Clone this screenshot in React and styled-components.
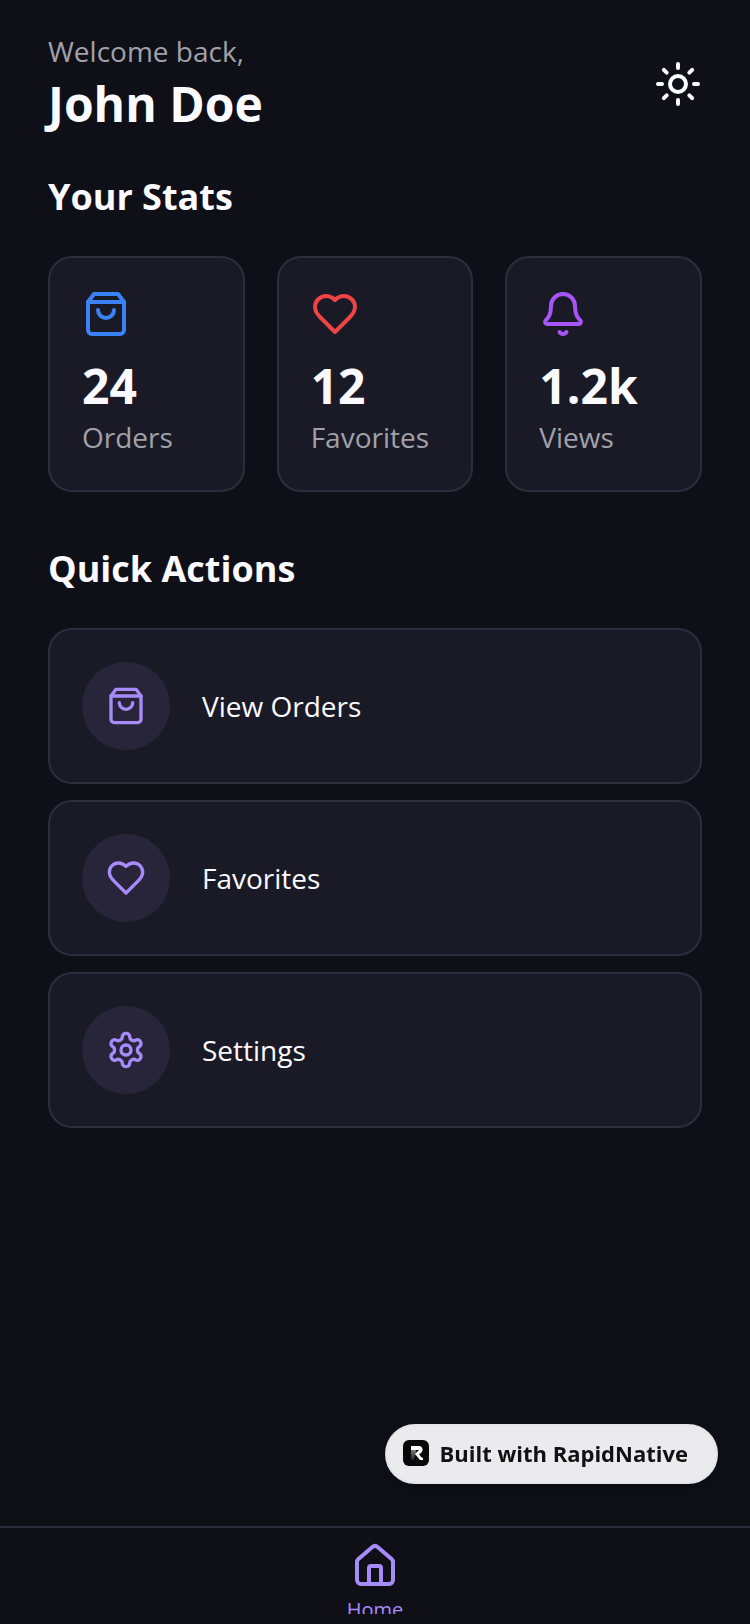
import React, { useState } from 'react';
import styled, { createGlobalStyle, css } from 'styled-components';
import { Sun, Bell, House } from 'lucide-react';

const background = '#0f0f18';
const surface = '#1a1a26';
const line = '#2d2d3d';
const foreground = '#fafaff';
const muted = '#a1a1aa';
const primary = '#a78bfa';

const GlobalStyle = createGlobalStyle`
  *, *::before, *::after {
    box-sizing: border-box;
  }
  body {
    margin: 0;
    background: ${background};
    color: ${foreground};
    font-family: 'Open Sans', 'Noto Sans', sans-serif;
    font-size: 28px;
    line-height: 40px;
  }
  button {
    padding: 0;
    border: 0;
    background: none;
    color: inherit;
    font: inherit;
    text-align: left;
    cursor: pointer;
  }
  h1, h2, p, ul {
    margin: 0;
    padding: 0;
    list-style: none;
  }
  svg {
    display: block;
  }
`

const cardStyles = css`
  background: ${surface};
  border: 2px solid ${line};
  border-radius: 24px;
  padding: 32px;
`

const Screen = styled.div`
  display: flex;
  flex-direction: column;
  min-height: 100vh;
`

const Header = styled.header`
  display: flex;
  align-items: center;
  justify-content: space-between;
  padding: 32px 48px;
`

const Muted = styled.p`
  margin-bottom: 2px;
  color: ${muted};
  line-height: 38px;
`

const Name = styled.h1`
  font-size: 48px;
  line-height: 64px;
  font-weight: 700;
`

const Content = styled.main`
  flex: 1;
  display: flex;
  flex-direction: column;
  gap: 48px;
  padding: 0 48px 48px;
`

const SectionTitle = styled.h2`
  margin-bottom: 30px;
  font-size: 36px;
  line-height: 58px;
  font-weight: 700;
`

const StatGrid = styled.div`
  display: grid;
  grid-template-columns: repeat(3, 1fr);
  gap: 32px;
`

const StatCard = styled.div`
  ${cardStyles};
`

const StatValue = styled.p`
  margin-top: 16px;
  font-size: 48px;
  line-height: 64px;
  font-weight: 700;
`

const ActionList = styled.ul`
  display: grid;
  gap: 16px;
`

const ActionButton = styled.button`
  && {
    ${cardStyles};
  }
  display: flex;
  align-items: center;
  gap: 32px;
  width: 100%;
`

const IconCircle = styled.span`
  display: grid;
  place-items: center;
  width: 88px;
  height: 88px;
  border-radius: 50%;
  background: rgba(167, 139, 250, 0.1);
  color: ${primary};
`

const TabBar = styled.nav`
  position: sticky;
  bottom: 0;
  display: flex;
  height: 98px;
  padding: 14px 0 10px;
  border-top: 2px solid ${line};
  background: ${background};
`

const Tab = styled.a`
  flex: 1;
  display: flex;
  flex-direction: column;
  align-items: center;
  gap: 6px;
  overflow: hidden;
  color: ${props => props.$active ? primary : muted};
  font-size: 20px;
  line-height: 28px;
  text-decoration: none;
  svg {
    flex-shrink: 0;
  }
`

const Badge = styled.a`
  position: fixed;
  right: 32px;
  bottom: 140px;
  display: flex;
  align-items: center;
  gap: 10px;
  height: 60px;
  padding: 0 28px 2px 16px;
  border: 2px solid #e4e4ea;
  border-radius: 30px;
  background: #ebebed;
  box-shadow: 0 4px 12px rgba(0, 0, 0, 0.3);
  color: #111114;
  font-size: 22px;
  line-height: 32px;
  font-weight: 700;
  text-decoration: none;
  white-space: nowrap;
`

function StrokeIcon({size, color = 'currentColor', children}) {
  return (
    <svg
      width={size}
      height={size}
      viewBox="0 0 24 24"
      fill="none"
      stroke={color}
      strokeWidth="2"
      strokeLinecap="round"
      strokeLinejoin="round"
      aria-hidden="true"
    >
      {children}
    </svg>
  )
}

function BagIcon(props) {
  return (
    <StrokeIcon {...props}>
      <path d="M6 2 3 6v14a2 2 0 0 0 2 2h14a2 2 0 0 0 2-2V6l-3-4Z" />
      <path d="M3 6h18" />
      <path d="M16 10a4 4 0 0 1-8 0" />
    </StrokeIcon>
  )
}

function HeartIcon(props) {
  return (
    <StrokeIcon {...props}>
      <path d="M19 14c1.49-1.46 3-3.21 3-5.5A5.5 5.5 0 0 0 16.5 3c-1.76 0-3 .5-4.5 2-1.5-1.5-2.74-2-4.5-2A5.5 5.5 0 0 0 2 8.500c0 2.300 1.500 4.050 3 5.500l7 7Z" />
    </StrokeIcon>
  )
}

function GearIcon(props) {
  return (
    <StrokeIcon {...props}>
      <path d="M12.22 2h-.44a2 2 0 0 0-2 2v.18a2 2 0 0 1-1 1.73l-.43.25a2 2 0 0 1-2 0l-.15-.08a2 2 0 0 0-2.73.73l-.22.38a2 2 0 0 0 .73 2.73l.15.1a2 2 0 0 1 1 1.72v.51a2 2 0 0 1-1 1.74l-.15.09a2 2 0 0 0-.73 2.73l.22.38a2 2 0 0 0 2.73.73l.15-.08a2 2 0 0 1 2 0l.43.25a2 2 0 0 1 1 1.73V20a2 2 0 0 0 2 2h.44a2 2 0 0 0 2-2v-.18a2 2 0 0 1 1-1.73l.43-.25a2 2 0 0 1 2 0l.15.08a2 2 0 0 0 2.73-.73l.22-.39a2 2 0 0 0-.73-2.73l-.15-.08a2 2 0 0 1-1-1.74v-.5a2 2 0 0 1 1-1.74l.15-.09a2 2 0 0 0 .73-2.73l-.22-.38a2 2 0 0 0-2.73-.73l-.15.08a2 2 0 0 1-2 0l-.43-.25a2 2 0 0 1-1-1.73V4a2 2 0 0 0-2-2z" />
      <circle cx="12" cy="12" r="3" />
    </StrokeIcon>
  )
}

const stats = [
  { label: 'Orders', value: '24', icon: BagIcon, color: '#3b82f6' },
  { label: 'Favorites', value: '12', icon: HeartIcon, color: '#ef4444' },
  { label: 'Views', value: '1.2k', icon: Bell, color: '#a855f7' },
];

const actions = [
  { label: 'View Orders', icon: BagIcon },
  { label: 'Favorites', icon: HeartIcon },
  { label: 'Settings', icon: GearIcon },
];

function RapidNativeLogo() {
  return (
    <svg width="26" height="26" viewBox="0 0 26 26" aria-hidden="true">
      <defs>
        <linearGradient id="stem" x1="0" y1="0" x2="0" y2="1">
          <stop offset="0" stopColor="#777" />
          <stop offset="1" stopColor="#222" />
        </linearGradient>
      </defs>
      <rect width="26" height="26" rx="6" fill="#08080a" />
      <path d="M8 10h5v3l-2 7H8z" fill="url(#stem)" />
      <path d="M8 6h9a4 4 0 0 1 1 7l-2 1 2 3 2 1v2h-3l-5-6 4-4H8z" fill="#fff" />
    </svg>
  )
}

function Stat({label, value, icon: Icon, color}) {
  return (
    <StatCard>
      <Icon size={48} color={color} />
      <StatValue>{value}</StatValue>
      <Muted>{label}</Muted>
    </StatCard>
  )
}

function Action({label, icon: Icon}) {
  return (
    <li>
      <ActionButton type="button">
        <IconCircle><Icon size={40} /></IconCircle>
        {label}
      </ActionButton>
    </li>
  )
}

export default function App() {
  const [tab, setTab] = useState('home');

  return (
    <Screen>
      <GlobalStyle />
      <Header>
        <div>
          <Muted>Welcome back,</Muted>
          <Name>John Doe</Name>
        </div>
        <button type="button" aria-label="Toggle theme">
          <Sun size={48} />
        </button>
      </Header>
      <Content>
        <section>
          <SectionTitle>Your Stats</SectionTitle>
          <StatGrid>
            {stats.map(stat => <Stat key={stat.label} {...stat} />)}
          </StatGrid>
        </section>
        <section>
          <SectionTitle>Quick Actions</SectionTitle>
          <ActionList>
            {actions.map(action => <Action key={action.label} {...action} />)}
          </ActionList>
        </section>
      </Content>
      <TabBar>
        <Tab href="#home" $active={tab === 'home'} onClick={() => setTab('home')}>
          <House size={48} />
          Home
        </Tab>
      </TabBar>
      <Badge href="#rapidnative">
        <RapidNativeLogo />
        Built with RapidNative
      </Badge>
    </Screen>
  )
}
